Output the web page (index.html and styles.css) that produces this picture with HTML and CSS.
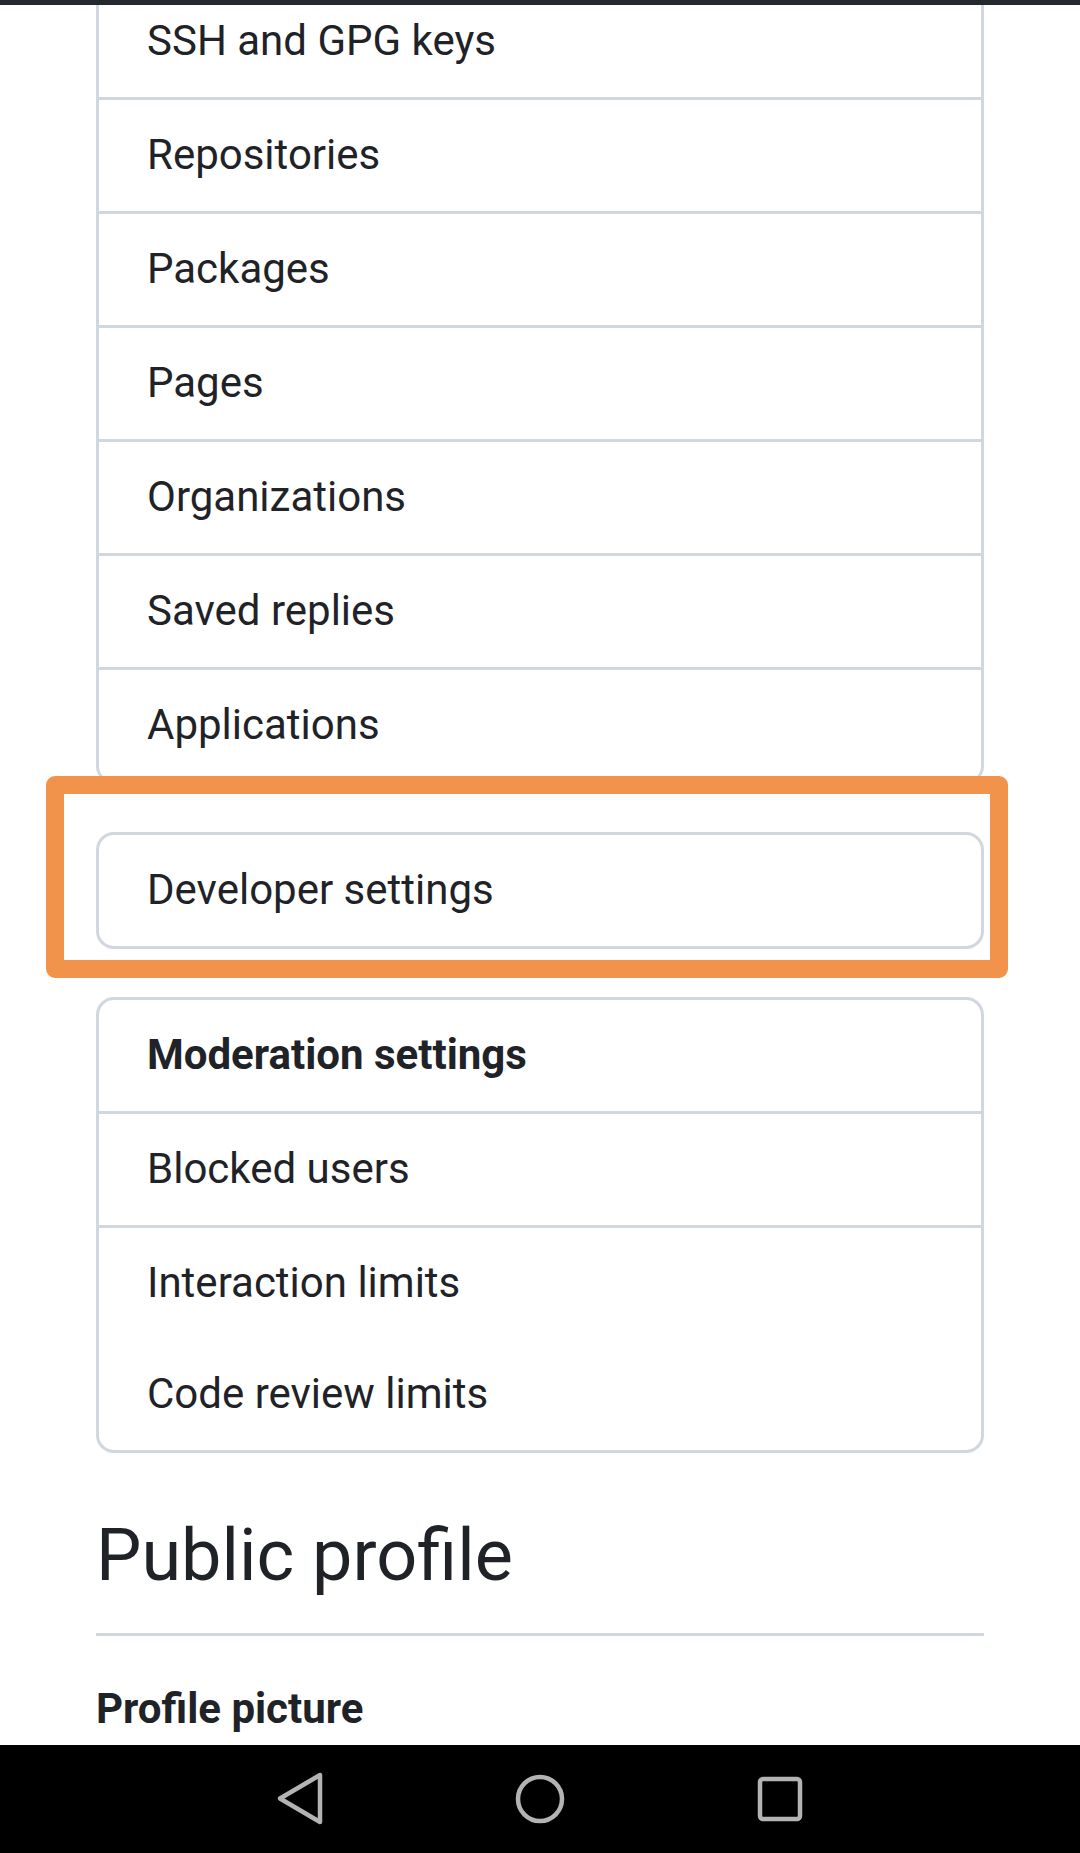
FILE: index.html
```html
<!DOCTYPE html>
<html lang="en">
<head>
<meta charset="utf-8">
<title>Settings</title>
<link rel="stylesheet" href="styles.css">
</head>
<body>
<div class="topbar"></div>
<main class="page">
  <nav class="menu">
    <a class="menu-item">SSH and GPG keys</a>
    <a class="menu-item">Repositories</a>
    <a class="menu-item">Packages</a>
    <a class="menu-item">Pages</a>
    <a class="menu-item">Organizations</a>
    <a class="menu-item">Saved replies</a>
    <a class="menu-item">Applications</a>
  </nav>

  <div class="highlight">
    <nav class="menu">
      <a class="menu-item">Developer settings</a>
    </nav>
  </div>

  <nav class="menu">
    <h3 class="menu-heading">Moderation settings</h3>
    <a class="menu-item">Blocked users</a>
    <a class="menu-item">Interaction limits</a>
    <a class="menu-item menu-item-plain">Code review limits</a>
  </nav>

  <h2 class="subhead">Public profile</h2>
  <h3 class="field-label">Profile picture</h3>
</main>

<div class="navbar">
  <svg class="nav-icon" viewBox="0 0 60 60" width="60" height="60"><path d="M50 6 L50 53 L10 29.5 Z" fill="none" stroke="#b3b3b3" stroke-width="4.5" stroke-linejoin="round"/></svg>
  <svg class="nav-icon" viewBox="0 0 60 60" width="60" height="60"><circle cx="30" cy="30" r="22" fill="none" stroke="#b3b3b3" stroke-width="4.5"/></svg>
  <svg class="nav-icon" viewBox="0 0 60 60" width="60" height="60"><rect x="10" y="10" width="40" height="40" rx="3" fill="none" stroke="#b3b3b3" stroke-width="4.5"/></svg>
</div>
</body>
</html>
```

FILE: styles.css
```css
* { box-sizing: border-box; }

html, body {
  margin: 0;
  padding: 0;
  background: #ffffff;
}

body {
  font-family: Roboto, "Liberation Sans", sans-serif;
  color: #1f2328;
  width: 1080px;
  height: 1853px;
  overflow: hidden;
}

.topbar {
  position: fixed;
  top: 0;
  left: 0;
  right: 0;
  height: 5px;
  background: #24292f;
  z-index: 5;
}

.page {
  margin-top: -17px;
  padding: 0 96px;
  display: flex;
  flex-direction: column;
  gap: 48px;
}

.menu {
  display: flex;
  flex-direction: column;
  border: 3px solid #d0d7de;
  border-radius: 18px;
  background: #ffffff;
}

.menu-item,
.menu-heading {
  display: block;
  margin: 0;
  padding: 23px 48px 25px;
  font-size: 42px;
  line-height: 63px;
  font-weight: 400;
  color: #1f2328;
  text-decoration: none;
  border-top: 3px solid #d0d7de;
}

.menu > :first-child {
  border-top: 0;
}

.menu-heading {
  font-weight: 700;
}

.menu-item-plain {
  border-top: 0;
}

.highlight {
  position: relative;
}

.highlight::before {
  content: "";
  position: absolute;
  top: -56px;
  left: -50px;
  right: -24px;
  bottom: -29px;
  border: 18px solid #f2934b;
  border-radius: 9px;
  pointer-events: none;
}

.subhead {
  margin: 10px 0 0;
  padding-bottom: 32px;
  border-bottom: 3px solid #d0d7de;
  font-size: 72px;
  line-height: 90px;
  font-weight: 400;
}

.field-label {
  margin: -7px 0 0;
  font-size: 42px;
  line-height: 63px;
  font-weight: 700;
}

.navbar {
  position: fixed;
  left: 0;
  right: 0;
  bottom: 0;
  height: 108px;
  background: #000000;
  display: flex;
  justify-content: center;
  align-items: center;
  gap: 180px;
  z-index: 5;
}

.nav-icon {
  display: block;
}
```
